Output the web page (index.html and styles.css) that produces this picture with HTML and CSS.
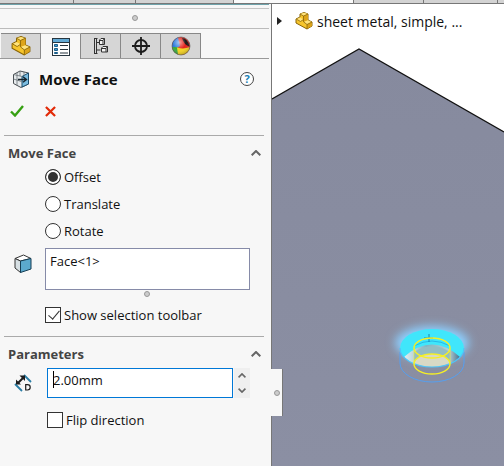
FILE: index.html
```html
<!DOCTYPE html>
<html lang="en">
<head>
    <meta charset="UTF-8">
    <meta name="viewport" content="width=device-width, initial-scale=1.0">
    <title>Move Face</title>
    <link rel="stylesheet" href="styles.css">
</head>
<body>
    <!-- shared part icon -->
    <svg class="defs" width="0" height="0">
        <symbol id="part" viewBox="0 0 18 18">
            <path d="M1 11V7l4-2V2l4-1.500 4 1.500v6l4 2v4l-5 3z" fill="#f6c52c" stroke="#8a6508" stroke-linejoin="round"/>
            <path d="M5 2l3.500 2L13 2 9 .8zM1.500 7.200L5 5.500l3.500 2-3 2zM8.500 10l4-2 4 2-4.500 2.500z" fill="#ffe37c"/>
            <path d="M12 12.500l4.800-2.300V14L12 16.700zM8.500 4L13 2v6l-4.500 2z" fill="#dda419"/>
            <path d="M5 2l3.500 2v5.800l3.500 2.700V17M8.500 4L13 2M1.500 7.200l4 2.300 3-2M12 12.500l5-2.500" fill="none" stroke="#8a6508" stroke-width=".8"/>
        </symbol>
        <symbol id="up" viewBox="0 0 10 6">
            <path d="M.7 5.300L5 1l4.300 4.300" fill="none" stroke="currentColor" stroke-width="2"/>
        </symbol>
    </svg>

    <div class="strip">
        <span class="seg seg-a"></span>
        <span class="seg seg-b"></span>
        <span class="seg seg-c"></span>
        <span class="seg seg-open"></span>
        <span class="seg seg-d"></span>
        <span class="seg seg-a"></span>
        <span class="seg seg-e"></span>
    </div>

    <div class="main">
        <div class="panel">
            <div class="splitter"><span class="dot"></span></div>

            <div class="tabs">
                <button class="tab" aria-label="Feature tree">
                    <svg width="20" height="20"><use href="#part"/></svg>
                </button>
                <button class="tab active" aria-label="Properties">
                    <svg width="18" height="18" viewBox="0 0 18 18">
                        <rect x=".5" y=".5" width="17" height="17" fill="#fff" stroke="#27353f"/>
                        <rect x="1" y="1" width="16" height="3" fill="#62a9d4"/>
                        <path d="M0 4.500h18" stroke="#27353f"/>
                        <path d="M2.500 6.500h3v2h-3zM2.500 10.500h3v2h-3zM2.500 14.500h3v1h-3z" fill="#3f9bd0" stroke="#1d5f8a"/>
                        <path d="M8 7.500h8M8 11.500h8M8 15h8" stroke="#27353f"/>
                    </svg>
                </button>
                <button class="tab" aria-label="Configurations">
                    <svg width="16" height="18" viewBox="0 0 16 18" fill="#f4f4f4" stroke="#333">
                        <path d="M1.500 1.500h3M1.500 1v16M1.500 16.500h3M3.500 1.500v15M3.500 5.500h3M3.500 13h4" fill="none"/>
                        <path d="M6.500 3l1.500-1.500h3.500v6h-5zM8.500 11l1.500-1.500h4.500v5.500h-6z"/>
                        <path d="M6.500 3.500h3.500v4M10 3.500l1.500-2M8.500 11.500H13V15M13 11.500l1.500-2" fill="none"/>
                    </svg>
                </button>
                <button class="tab" aria-label="Dimensions">
                    <svg width="18" height="18" viewBox="0 0 18 18" fill="none" stroke="#1c1c1c" stroke-width="1.800">
                        <circle cx="9" cy="9" r="6"/>
                        <path d="M9 0v18M0 9h18"/>
                    </svg>
                </button>
                <button class="tab" aria-label="Appearances">
                    <svg width="20" height="20" viewBox="0 0 20 20">
                        <defs>
                            <radialGradient id="shine" cx=".4" cy=".3" r=".75">
                                <stop offset="0" stop-color="#fff" stop-opacity=".6"/>
                                <stop offset=".5" stop-color="#fff" stop-opacity="0"/>
                                <stop offset="1" stop-color="#000" stop-opacity=".3"/>
                            </radialGradient>
                        </defs>
                        <circle cx="10" cy="10" r="9" fill="#e2231c"/>
                        <path d="M7 1.500A9 9 0 0 0 1 11l5 1 3-2z" fill="#2b78dc"/>
                        <path d="M1 11a9 9 0 0 0 6 7.500L7 11z" fill="#38a83c"/>
                        <path d="M6 11.500q7 2 12.800-.5A9 9 0 0 1 7 18.500z" fill="#f6d420"/>
                        <path d="M11 2q6 .5 7.500 8.500-5.500-1.500-7.500-8.500z" fill="#1a1414"/>
                        <circle cx="10" cy="10" r="9" fill="url(#shine)" stroke="#555" stroke-width=".6"/>
                    </svg>
                </button>
            </div>

            <div class="title">
                <svg width="18" height="18" viewBox="0 0 18 18">
                    <path d="M1.500 4.500L8 1l8.500 2v11L9 17.500l-7.500-4z" fill="#e7ebed" stroke="#4a5054"/>
                    <path d="M10 6.500L16.500 3v11L10 17z" fill="#7bbce0" stroke="#1b4d6b"/>
                    <path d="M1.500 4.500l8.500 2M5 3v12.500M1.500 9l8 2.500M8 1v5M12 2v3" fill="none" stroke="#697176" stroke-width=".8"/>
                    <path d="M6 9.500h8M11 6.700l3.500 2.800-3.500 2.800" fill="none" stroke="#16242d" stroke-width="1.400"/>
                </svg>
                <h1>Move Face</h1>
                <button class="help" aria-label="Help">?</button>
            </div>

            <div class="actions">
                <button aria-label="OK">
                    <svg width="14" height="12" viewBox="0 0 14 12"><path d="M1 6.500l4 4L13 1" fill="none" stroke="#36a012" stroke-width="2.400"/></svg>
                </button>
                <button aria-label="Cancel">
                    <svg width="11" height="11" viewBox="0 0 12 12"><path d="M1 1l10 10M11 1L1 11" fill="none" stroke="#e22a08" stroke-width="2.400"/></svg>
                </button>
            </div>

            <section class="group">
                <div class="group-head">
                    <h2>Move Face</h2>
                    <button aria-label="Collapse Move Face"><svg width="10" height="6"><use href="#up"/></svg></button>
                </div>
                <div class="radios">
                    <label class="option"><input type="radio" name="mode" checked>Offset</label>
                    <label class="option"><input type="radio" name="mode">Translate</label>
                    <label class="option"><input type="radio" name="mode">Rotate</label>
                </div>
                <div class="field">
                    <div class="field-icon">
                        <svg width="18" height="20" viewBox="0 0 18 20">
                            <path d="M1 4.500L9.500 1 17 4.500 6.500 7z" fill="#fff" stroke="#333" stroke-linejoin="round"/>
                            <path d="M1 4.500L6.500 7v11.500L1 14z" fill="#d7e0e4" stroke="#333" stroke-linejoin="round"/>
                            <path d="M6.500 7L17 4.500v10.500L6.500 18.500z" fill="#5ba9cd" stroke="#153d54" stroke-linejoin="round"/>
                        </svg>
                    </div>
                    <textarea class="faces" aria-label="Faces to move" spellcheck="false">Face&lt;1&gt;</textarea>
                </div>
                <div class="grip"><span class="dot"></span></div>
                <label class="option tick"><input type="checkbox" checked>Show selection toolbar</label>
            </section>

            <section class="group params">
                <div class="group-head">
                    <h2>Parameters</h2>
                    <button aria-label="Collapse Parameters"><svg width="10" height="6"><use href="#up"/></svg></button>
                </div>
                <div class="field">
                    <div class="field-icon">
                        <svg width="18" height="18" viewBox="0 0 18 18">
                            <path d="M10 1l7 7M1 10l7 7" stroke="#2b7da5" stroke-width="1.800"/>
                            <path d="M4 9l6-6" stroke="#1c1c1c" stroke-width="2"/>
                            <path d="M2 10.500V5.500l5 5zM11 1.500v5.500l-5.500-5.500z" fill="#1c1c1c"/>
                            <path d="M11.700 10.600h1.800q2.700 0 2.700 2.700t-2.700 2.700h-1.800z" fill="none" stroke="#1c1c1c" stroke-width="1.200"/>
                        </svg>
                    </div>
                    <div class="distance">
                        <input type="text" value="2.00mm" aria-label="Distance">
                        <span class="caret"></span>
                    </div>
                    <div class="spin">
                        <button aria-label="Increase"><svg width="8" height="5"><use href="#up"/></svg></button>
                        <button class="down" aria-label="Decrease"><svg width="8" height="5"><use href="#up"/></svg></button>
                    </div>
                </div>
                <label class="option tick"><input type="checkbox">Flip direction</label>
            </section>

            <div class="handle"><span class="dot"></span></div>
        </div>

        <div class="viewport">
            <svg class="model" viewBox="0 0 232 462" preserveAspectRatio="xMinYMin slice">
                <defs>
                    <linearGradient id="sheet" x1="0" y1="0" x2="0" y2="1">
                        <stop offset="0" stop-color="#868a9e"/>
                        <stop offset="1" stop-color="#8b8fa3"/>
                    </linearGradient>
                    <linearGradient id="wall">
                        <stop offset="0" stop-color="#e8eef0"/>
                        <stop offset=".4" stop-color="#7fb4c4"/>
                        <stop offset=".8" stop-color="#b8d0d2"/>
                        <stop offset="1" stop-color="#47708e"/>
                    </linearGradient>
                    <filter id="glow" x="-50%" y="-50%" width="200%" height="200%"><feGaussianBlur stdDeviation="5"/></filter>
                    <clipPath id="hole"><ellipse cx="160" cy="344" rx="32" ry="19"/></clipPath>
                </defs>
                <path d="M0 95L87 45l145 83v334H0z" fill="url(#sheet)"/>
                <path d="M0 95L87 45l145 83" fill="none" stroke="#111" stroke-width="1.300"/>
                <ellipse cx="160" cy="339" rx="37" ry="17" fill="#8ccfff" filter="url(#glow)"/>
                <ellipse cx="160" cy="344" rx="32" ry="19" fill="#40e6fb"/>
                <g clip-path="url(#hole)">
                    <path d="M132 353q28-25 56 0-14 14-28 14-14-1-28-14z" fill="url(#wall)"/>
                    <path d="M142 348q18-12 36 0v16h-36z" fill="#93bdc4"/>
                    <ellipse cx="160" cy="360" rx="18" ry="10" fill="#d9d9c5"/>
                </g>
                <path d="M142 342q18-10 36 0" fill="none" stroke="#26b9e9"/>
                <path d="M128 348v11a32 19 0 0 0 64 0v-11" fill="none" stroke="#559ff0"/>
                <path d="M128 344a32 19 0 0 0 64 0" fill="none" stroke="#4fc4fa" stroke-width="1.200"/>
                <path d="M152 334h9M157 330v8" stroke="#1688b7"/>
                <g fill="none" stroke="#f5ef26" stroke-width="1.400">
                    <ellipse cx="160" cy="344" rx="18" ry="10"/>
                    <ellipse cx="160" cy="360" rx="18" ry="10"/>
                    <path d="M142 344v16M178 344v16" stroke-opacity=".4"/>
                </g>
            </svg>
            <div class="tree">
                <svg class="expand" width="5" height="8" viewBox="0 0 5 8"><path d="M0 0l5 4-5 4z" fill="#222"/></svg>
                <svg width="18" height="18"><use href="#part"/></svg>
                <span class="name">sheet metal, simple, ...</span>
            </div>
        </div>
    </div>
</body>
</html>
```

FILE: styles.css
```css
* {
    box-sizing: border-box;
}

body {
    margin: 0;
    min-height: 100vh;
    display: flex;
    flex-direction: column;
    font-family: "Open Sans", "Noto Sans", sans-serif;
    font-size: 13px;
    line-height: 18px;
    color: #111;
    background: #fff;
}

.defs {
    position: absolute;
}

svg {
    display: block;
    flex: none;
}

button {
    padding: 0;
    border: 0;
    background: none;
    color: #666;
    cursor: pointer;
}

h1, h2 {
    margin: 0;
    flex: 1;
}

/* bottom edge of the ribbon tabs */
.strip {
    display: flex;
    height: 4px;
    border-bottom: 1px solid #777;
}

.seg {
    min-width: 0;
    background: #d3d3d3;
    border-right: 1px solid #777;
}

.seg-a { flex: 74; }
.seg-b { flex: 62; }
.seg-c { flex: 98; }
.seg-d { flex: 70; }
.seg-e { flex: 6; border-right: 0; }
.seg-open { flex: 121; background: #fafafa; }

.main {
    flex: 1;
    display: flex;
}

.panel {
    position: relative;
    width: 272px;
    background: #f7f7f7;
    border-right: 1px solid #777;
}

.splitter {
    display: flex;
    align-items: center;
    justify-content: center;
    height: 25px;
    margin-right: 2px;
    border-top: 1px solid #6fa3ab;
    border-bottom: 1px solid #bbb;
    box-shadow: inset 0 3px #f7f7f7, inset 0 4px #c4c4c4;
    padding-top: 3px;
}

.dot {
    width: 6px;
    height: 6px;
    border: 1px solid #999;
    border-radius: 50%;
    background: #ccc;
}

.tabs {
    display: flex;
    height: 30px;
    margin-right: 2px;
    padding: 4px 0 0 1px;
    border-bottom: 1px solid #999;
}

.tab {
    display: flex;
    align-items: center;
    justify-content: center;
    width: 40px;
    background: #d6d6d6;
    border: 1px solid #888;
    border-width: 1px 1px 0 0;
}

.tab.active {
    height: 26px;
    background: #f7f7f7;
    border-top-color: #bbb;
}

.title {
    display: flex;
    align-items: center;
    height: 40px;
    padding: 0 17px 0 12px;
}

h1 {
    padding-left: 9px;
    font-size: 15px;
    line-height: 20px;
}

.help {
    width: 14px;
    height: 14px;
    border: 1px solid #444;
    border-radius: 50%;
    background: #fff;
    color: #1b7fb4;
    font: bold 11px/12px "Open Sans", sans-serif;
}

.actions {
    display: flex;
    align-items: center;
    gap: 21px;
    height: 24px;
    padding-left: 10px;
}

.group {
    margin: 12px 7px 0 4px;
    padding-top: 7px;
    border-top: 1px solid #aaa;
}

.group-head {
    display: flex;
    align-items: center;
    height: 20px;
    padding: 0 3px 0 4px;
}

h2 {
    font-size: 13px;
    color: #444;
}

.radios {
    display: flex;
    flex-direction: column;
    gap: 9px;
    padding: 5px 0 8px 41px;
}

.option {
    display: flex;
    align-items: center;
    gap: 3px;
    height: 18px;
}

.option input {
    appearance: none;
    width: 16px;
    height: 16px;
    margin: 0;
    border: 1px solid #333;
    background: #fff;
}

.option input[type="radio"] {
    border-radius: 50%;
}

.option input[type="radio"]:checked {
    background: #333;
    box-shadow: inset 0 0 0 2px #fff;
}

/* tick mark */
.option input[type="checkbox"]:checked::before {
    content: "";
    display: block;
    width: 5px;
    height: 10px;
    margin: 0 0 0 5px;
    border: solid #333;
    border-width: 0 1px 1px 0;
    transform: rotate(40deg);
}

.tick {
    padding-left: 41px;
}

.field {
    display: flex;
}

.field-icon {
    width: 41px;
    padding: 6px 0 0 10px;
}

.faces {
    flex: 1;
    height: 42px;
    margin-right: 14px;
    padding: 3px 4px;
    border: 1px solid #868ba8;
    border-radius: 0;
    outline: 0;
    resize: none;
    background: #fff;
    color: #111;
    font: inherit;
}

.grip {
    display: flex;
    justify-content: center;
    padding: 1px 0 9px 26px;
}

.params .field-icon {
    width: 43px;
}

.params .field {
    margin: 4px 0 13px;
}

.params .tick {
    padding-left: 43px;
}

.distance {
    position: relative;
    flex: 1;
}

.distance input {
    display: block;
    width: 100%;
    height: 30px;
    padding: 0 5px 6px;
    border: 1px solid #0078d7;
    outline: 0;
    background: #fff;
    color: #111;
    font: inherit;
}

.caret {
    position: absolute;
    left: 6px;
    top: 3px;
    width: 1px;
    height: 17px;
    background: #000;
}

.spin {
    display: flex;
    flex-direction: column;
    width: 16px;
    margin: 0 14px 0 1px;
    background: #efefef;
}

.spin button {
    flex: 1;
    display: flex;
    align-items: center;
    justify-content: center;
}

.spin .down svg {
    transform: rotate(180deg);
}

/* collapse handle hangs over the graphics area */
.handle {
    position: absolute;
    right: -12px;
    top: 365px;
    display: flex;
    align-items: center;
    justify-content: center;
    width: 12px;
    height: 47px;
    background: #f7f7f7;
    border-right: 1px solid #777;
    z-index: 1;
}

.viewport {
    position: relative;
    flex: 1;
    overflow: hidden;
    background: #fff;
}

.model {
    position: absolute;
    inset: 0;
    width: 100%;
    height: 100%;
}

.tree {
    position: relative;
    display: flex;
    align-items: center;
    padding: 6px 0 0 5px;
}

.expand {
    margin-right: 13px;
}

.name {
    padding: 3px 0 0 4px;
    font-size: 14px;
    white-space: nowrap;
}
```
